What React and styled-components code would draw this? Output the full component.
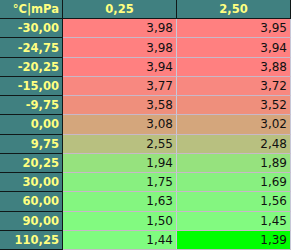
import React from 'react';
import styled, { createGlobalStyle } from 'styled-components';

const GlobalStyle = createGlobalStyle`
  html, body {
    margin: 0;
    padding: 0;
    background: #ffffff;
  }
`;

const Grid = styled.div`
  display: grid;
  grid-template-columns: 63px 114px 114px;
  grid-template-rows: repeat(13, 1fr);
  width: 291px;
  height: 250px;
  font-family: "DejaVu Sans", Verdana, sans-serif;
`;

const HeadCell = styled.div`
  background: #408080;
  color: #ffff80;
  font-weight: bold;
  font-size: 11.5px;
  display: flex;
  align-items: center;
  justify-content: ${(p) => (p.align === 'center' ? 'center' : 'flex-end')};
  padding-right: ${(p) => (p.align === 'center' ? '0' : '3px')};
  border-right: 1px solid #101818;
  border-bottom: 1px solid #101818;
  box-sizing: border-box;
  overflow: hidden;
  white-space: nowrap;
`;

const DataCell = styled.div`
  background: ${(p) => p.bg};
  color: #101010;
  font-size: 12px;
  display: flex;
  align-items: center;
  justify-content: flex-end;
  padding-right: 3px;
  border-right: 1px solid #c8c8d8;
  border-bottom: 1px solid #c8b8c8;
  box-sizing: border-box;
  white-space: nowrap;
`;

const rows = [
  ['-30,00', '3,98', '3,95', '#ff8080'],
  ['-24,75', '3,98', '3,94', '#ff8080'],
  ['-20,25', '3,94', '3,88', '#ff8080'],
  ['-15,00', '3,77', '3,72', '#f88880'],
  ['-9,75', '3,58', '3,52', '#ef8f7c'],
  ['0,00', '3,08', '3,02', '#d4a67c'],
  ['9,75', '2,55', '2,48', '#b8c080'],
  ['20,25', '1,94', '1,89', '#96e27e'],
  ['30,00', '1,75', '1,69', '#88f080'],
  ['60,00', '1,63', '1,56', '#84f680'],
  ['90,00', '1,50', '1,45', '#82fa80'],
  ['110,25', '1,44', '1,39', '#80fc80'],
];

export default function App() {
  return (
    <>
      <GlobalStyle />
      <Grid>
        <HeadCell>°C|mPa</HeadCell>
        <HeadCell align="center">0,25</HeadCell>
        <HeadCell align="center">2,50</HeadCell>
        {rows.map(([t, a, b, bg], i) => (
          <React.Fragment key={t}>
            <HeadCell>{t}</HeadCell>
            <DataCell bg={bg}>{a}</DataCell>
            <DataCell bg={i === rows.length - 1 ? '#00ff00' : bg}>{b}</DataCell>
          </React.Fragment>
        ))}
      </Grid>
    </>
  );
}
